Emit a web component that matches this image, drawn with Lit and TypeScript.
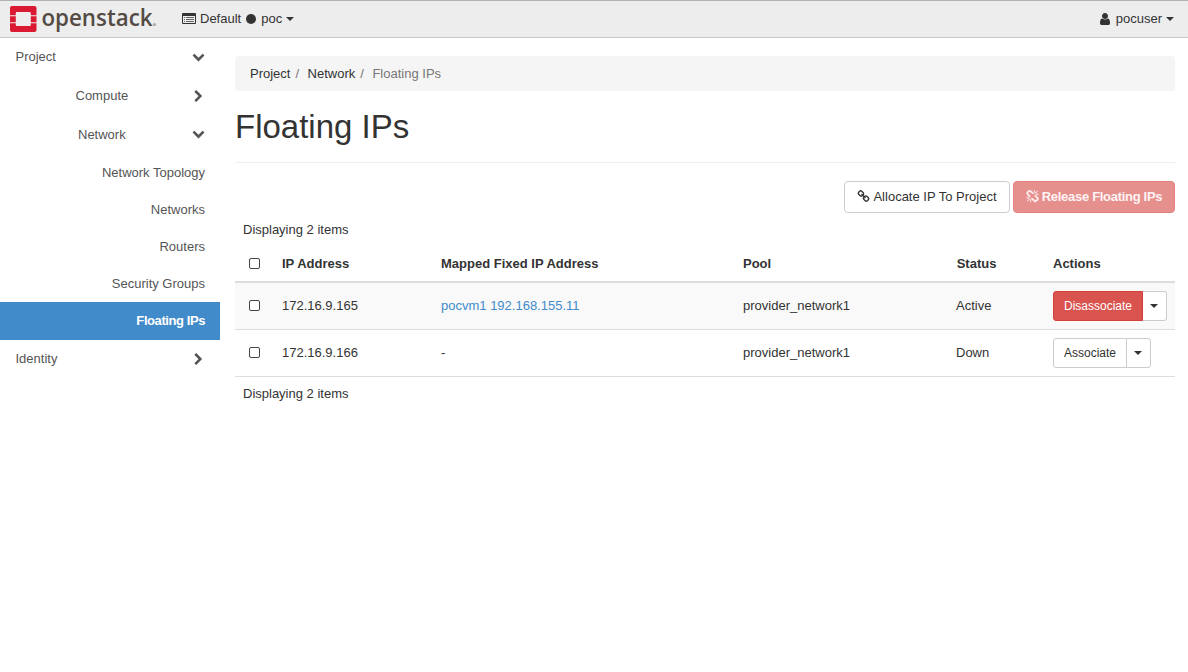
import { LitElement, html, css, svg } from "lit";
import { customElement } from "lit/decorators.js";

const PATHS = {
  user: "M1536 1399q0 109-62.5 187t-150.5 78h-854q-88 0-150.5-78t-62.5-187q0-85 8.5-160.5t31.5-152 58.5-131 94-89 134.5-34.5q131 128 313 128t313-128q76 0 134.5 34.5t94 89 58.5 131 31.5 152 8.5 160.5zm-256-887q0 159-112.5 271.5t-271.5 112.5-271.5-112.5-112.5-271.5 112.5-271.5 271.5-112.5 271.5 112.5 112.5 271.5z",
  link: "M1520 1216q0-40-28-68l-208-208q-28-28-68-28-42 0-72 32 3 3 19 18.5t21.5 21.5 15 19 13 25.5 3.5 27.5q0 40-28 68t-68 28q-15 0-27.5-3.5t-25.5-13-19-15-21.5-21.5-18.5-19q-33 31-33 73 0 40 28 68l206 207q27 27 68 27 40 0 68-26l147-146q28-28 28-67zm-703-705q0-40-28-68l-206-207q-28-28-68-28-39 0-68 27l-147 146q-28 28-28 67 0 40 28 68l208 208q27 27 68 27 42 0 72-31-3-3-19-18.5t-21.5-21.5-15-19-13-25.5-3.5-27.5q0-40 28-68t68-28q15 0 27.5 3.5t25.5 13 19 15 21.5 21.5 18.5 19q33-31 33-73zm895 705q0 120-85 203l-147 146q-83 83-203 83-121 0-204-85l-206-207q-83-83-83-203 0-123 88-209l-88-88q-86 88-208 88-120 0-204-84l-208-208q-84-84-84-204t85-203l147-146q83-83 203-83 121 0 204 85l206 207q83 83 83 203 0 123-88 209l88 88q86-88 208-88 120 0 204 84l208 208q84 84 84 204z",
  unlink: "M503 1271l-256 256q-10 9-23 9-12 0-23-9-9-10-9-23t9-23l256-256q10-9 23-9t23 9q9 10 9 23t-9 23zm169 41v320q0 14-9 23t-23 9-23-9-9-23v-320q0-14 9-23t23-9 23 9 9 23zm-224-224q0 14-9 23t-23 9h-320q-14 0-23-9t-9-23 9-23 23-9h320q14 0 23 9t9 23zm1264 128q0 120-85 203l-147 146q-83 83-203 83-121 0-204-85l-334-335q-21-21-42-56l239-18 273 274q28 28 68 27.5t68-27.5l147-146q28-28 28-67 0-40-28-68l-274-275 18-239q35 21 56 42l336 336q84 86 84 204zm-617-724l-239 18-273-274q-28-28-68-28-39 0-68 27l-147 146q-28 28-28 67 0 40 28 68l274 274-18 240q-35-21-56-42l-336-336q-84-86-84-204 0-120 85-203l147-146q83-83 203-83 121 0 204 85l334 335q21 21 42 56zm633 84q0 14-9 23t-23 9h-320q-14 0-23-9t-9-23 9-23 23-9h320q14 0 23 9t9 23zm-544-544v320q0 14-9 23t-23 9-23-9-9-23v-320q0-14 9-23t23-9 23 9 9 23zm407 151l-256 256q-11 9-23 9t-23-9q-9-10-9-23t9-23l256-256q10-9 23-9t23 9q9 10 9 23t-9 23z",
  down: "M1683 808l-742 741q-19 19-45 19t-45-19l-742-741q-19-19-19-45.5t19-45.5l166-165q19-19 45-19t45 19l531 531 531-531q19-19 45-19t45 19l166 165q19 19 19 45.5t-19 45.5z",
  right: "M1363 877l-742 742q-19 19-45 19t-45-19l-166-166q-19-19-19-45t19-45l531-531-531-531q-19-19-19-45t19-45l166-166q19-19 45-19t45 19l742 742q19 19 19 45t-19 45z",
};

const icon = (name: keyof typeof PATHS) => html`
  <svg class="icon icon-${name}" viewBox="0 0 1792 1792"><path d=${PATHS[name]}></path></svg>`;

const ROWS = [
  { ip: "172.16.9.165", mapped: "pocvm1 192.168.155.11", link: true, pool: "provider_network1", status: "Active", action: "Disassociate", danger: true },
  { ip: "172.16.9.166", mapped: "-", link: false, pool: "provider_network1", status: "Down", action: "Associate", danger: false },
];

@customElement("app-root")
export class AppRoot extends LitElement {
  static styles = css`
    :host { display: block; height: 672px; background: #fff; color: #333; overflow: hidden;
      font: 13px/18px "Liberation Sans", Arial, sans-serif; }
    * { box-sizing: border-box; }
    .icon { fill: currentColor; display: block; flex: none; width: 13px; height: 13px; }
    .caret { width: 0; height: 0; flex: none; border: 4px solid transparent; border-top-color: currentColor; border-bottom: 0; }
    header { height: 38px; display: flex; align-items: center; background: #ededed;
      border-top: 1px solid #b3b3b3; border-bottom: 1px solid #c8c8c8; padding: 0 14px 0 9px; }
    .logo { display: block; width: 150px; height: 36px; flex: none; overflow: visible; }
    .brand { font-family: "Open Sans", "Noto Sans", sans-serif; font-weight: 600; }
    .context { display: flex; align-items: center; margin-left: 23px; }
    .context .list { width: 14px; height: 12px; margin-right: 4px; display: block; }
    .dot { width: 10px; height: 10px; border-radius: 50%; background: #333; margin: 0 5px 0 5px; }
    .context .caret { margin-left: 4px; }
    .account { display: flex; align-items: center; margin-left: auto; }
    .account .icon { margin-right: 4px; width: 14px; height: 14px; }
    .account .caret { margin-left: 4px; }
    .body { display: flex; }
    nav { width: 220px; flex: none; color: #555; }
    .group { height: 39px; display: flex; align-items: center; justify-content: space-between; padding: 0 15px 0 15.500px; }
    .group.first { height: 38px; }
    .group.last { height: 38px; }
    .group .icon-down { margin: -2px 0.500px 0 0; }
    .group .icon-right { margin-top: 1px; }
    .sub { padding-left: 75.500px; }
    .sub.net { padding-left: 78px; }
    .item { height: 37px; display: flex; align-items: center; justify-content: flex-end; padding-right: 15px; }
    .item.active { height: 38px; background: #428bca; color: #fff; font-weight: bold; letter-spacing: -0.420px; }
    main { width: 940px; margin: 18px 0 0 15px; }
    .crumbs { height: 35px; border-radius: 4px; background: #f5f5f5; display: flex; align-items: center; padding: 0 15px; }
    .sep { color: #777; margin: 0 8.500px 0 5px; }
    .current { color: #777; }
    h1 { margin: 0; height: 72px; padding-top: 17px; font-size: 33px; line-height: 38px; font-weight: normal; border-bottom: 1px solid #eee; }
    .toolbar { display: flex; justify-content: flex-end; gap: 3px; margin-top: 18px; }
    .btn { height: 32px; display: flex; align-items: center; justify-content: center; border: 1px solid #ccc; border-radius: 4px; background: #fff; }
    .btn .icon { margin: -1px 3px 0 0; }
    .allocate { width: 166px; }
    .release { width: 162px; background: #e6908e; border-color: #e58380; color: #fdf3f3; font-weight: bold; letter-spacing: -0.300px; }
    .release .icon { stroke: currentColor; stroke-width: 60; }
    .caption { height: 32px; padding: 8px 8px 0; }
    .row { display: grid; grid-template-columns: 39px 159px 302px 213px 97px 130px; align-items: center;
      height: 47px; border-bottom: 1px solid #ddd; }
    .row > * { padding-left: 8px; }
    .head { height: 38px; font-weight: bold; border-bottom-width: 2px; padding-top: 1px; }
    .head .status { padding-left: 8.700px; }
    .striped { background: #f9f9f9; }
    .box { display: flex; padding-left: 14px; }
    .check { width: 11px; height: 11px; border: 1px solid #444; border-radius: 2px; background: #fff; }
    .row:not(.head) .check { margin-top: -1px; }
    .link { color: #428bca; }
    .actions { display: flex; font-size: 12px; }
    .small { height: 30px; border: 1px solid #ccc; background: #fff; display: flex; align-items: center; justify-content: center;
      width: 74px; border-radius: 3px 0 0 3px; }
    .small.danger { width: 90px; background: #d9534f; border-color: #d43f3a; color: #fff; }
    .small.toggle { width: 25px; margin-left: -1px; border-radius: 0 3px 3px 0; }
    .small.toggle .caret { margin-right: 1px; }
    .small.danger + .toggle { width: 24px; margin-left: 0; border-left: 0; }
  `;

  private logo() {
    return html`<svg class="logo" viewBox="9 0 150 36">
      <g fill="#da1a32">
        <path d="M12 5h22.500a2 2 0 0 1 2 2v7.300h-5.700v-2.300a1 1 0 0 0-1-1h-13a1 1 0 0 0-1 1v2.300h-5.800v-7.300a2 2 0 0 1 2-2z"></path>
        <path d="M10 15.300h5.800v6h-5.800zM30.800 15.300h5.700v6h-5.700z"></path>
        <path d="M10 22.300h5.800v1.700a1 1 0 0 0 1 1h13a1 1 0 0 0 1-1v-1.700h5.700v6.700a2 2 0 0 1-2 2h-22.500a2 2 0 0 1-2-2z"></path>
      </g>
      ${svg`<text class="brand" x="41.500" y="24.800" font-size="24" fill="#544b45" textLength="111" lengthAdjust="spacingAndGlyphs">openstack</text>`}
      <circle cx="154.500" cy="23.500" r="1.600" fill="#aaa"></circle>
    </svg>`;
  }

  render() {
    return html`
      <header>
        ${this.logo()}
        <div class="context">
          <svg class="list" viewBox="0 0 14 12">
            <path fill="#333" fill-rule="evenodd" d="M1 0h12a1 1 0 0 1 1 1v9a1 1 0 0 1-1 1h-12a1 1 0 0 1-1-1v-9a1 1 0 0 1 1-1zM1 3v7h12v-7z"></path>
            <path fill="#666" d="M2 4h1v1h-1zM4 4h8v1h-8zM2 6h1v1h-1zM4 6h8v1h-8zM2 8h1v1h-1zM4 8h8v1h-8z"></path>
          </svg>
          <span>Default</span><span class="dot"></span><span>poc</span><span class="caret"></span>
        </div>
        <div class="account">${icon("user")}<span>pocuser</span><span class="caret"></span></div>
      </header>
      <div class="body">
        <nav>
          <div class="group first"><span>Project</span>${icon("down")}</div>
          <div class="group sub"><span>Compute</span>${icon("right")}</div>
          <div class="group sub net"><span>Network</span>${icon("down")}</div>
          ${["Network Topology", "Networks", "Routers", "Security Groups"].map((t) => html`<div class="item">${t}</div>`)}
          <div class="item active">Floating IPs</div>
          <div class="group last"><span>Identity</span>${icon("right")}</div>
        </nav>
        <main>
          <div class="crumbs">
            <span>Project</span><span class="sep">/</span><span>Network</span><span class="sep">/</span><span class="current">Floating IPs</span>
          </div>
          <h1>Floating IPs</h1>
          <div class="toolbar">
            <div class="btn allocate">${icon("link")}<span>Allocate IP To Project</span></div>
            <div class="btn release">${icon("unlink")}<span>Release Floating IPs</span></div>
          </div>
          <div class="caption">Displaying 2 items</div>
          <div class="row head">
            <span class="box"><span class="check"></span></span><span>IP Address</span><span>Mapped Fixed IP Address</span><span>Pool</span><span class="status">Status</span><span>Actions</span>
          </div>
          ${ROWS.map((r, i) => html`
            <div class="row ${i % 2 ? "" : "striped"}">
              <span class="box"><span class="check"></span></span>
              <span>${r.ip}</span>
              <span class=${r.link ? "link" : ""}>${r.mapped}</span>
              <span>${r.pool}</span>
              <span>${r.status}</span>
              <div class="actions">
                <div class="small ${r.danger ? "danger" : ""}">${r.action}</div>
                <div class="small toggle"><span class="caret"></span></div>
              </div>
            </div>`)}
          <div class="caption">Displaying 2 items</div>
        </main>
      </div>
    `;
  }
}
